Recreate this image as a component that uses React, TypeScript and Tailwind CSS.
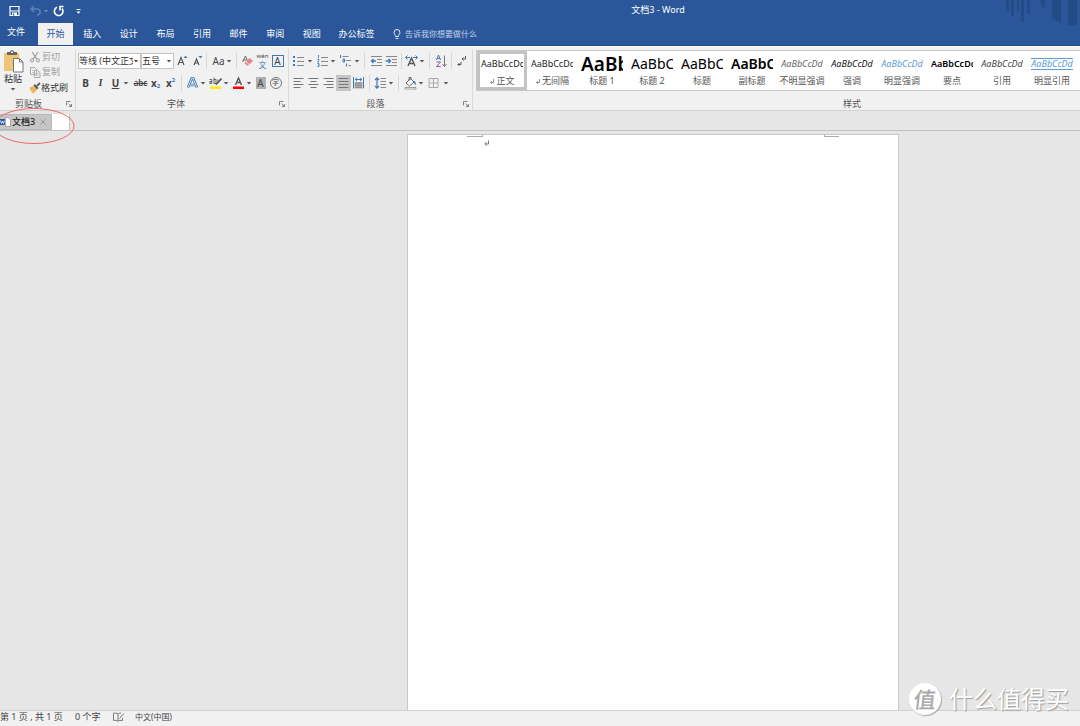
import type { ReactNode } from "react";
import { clsx } from "clsx";

const MENU_TABS = ["插入", "设计", "布局", "引用", "邮件", "审阅", "视图"];

type StyleItem = { label: string; sample: string; sampleClass: string; mark?: boolean; active?: boolean };

const STYLES: StyleItem[] = [
  { label: "正文", sample: "AaBbCcDd", sampleClass: "text-[9px] text-[#222]", mark: true, active: true },
  { label: "无间隔", sample: "AaBbCcDd", sampleClass: "text-[9px] text-[#222]", mark: true },
  { label: "标题 1", sample: "AaBb", sampleClass: "text-[19px] font-semibold text-black" },
  { label: "标题 2", sample: "AaBbC", sampleClass: "text-[14px] text-black" },
  { label: "标题", sample: "AaBbC", sampleClass: "text-[14px] text-black" },
  { label: "副标题", sample: "AaBbC", sampleClass: "text-[14px] font-semibold text-black" },
  { label: "不明显强调", sample: "AaBbCcDd", sampleClass: "text-[9px] italic text-[#666]" },
  { label: "强调", sample: "AaBbCcDd", sampleClass: "text-[9px] italic text-[#111]" },
  { label: "明显强调", sample: "AaBbCcDd", sampleClass: "text-[9px] italic text-[#5b9bd5]" },
  { label: "要点", sample: "AaBbCcDd", sampleClass: "text-[9px] font-semibold text-black" },
  { label: "引用", sample: "AaBbCcDd", sampleClass: "text-[9px] italic text-[#444]" },
  { label: "明显引用", sample: "AaBbCcDd", sampleClass: "border-y border-[#5b9bd5] text-[9px] italic text-[#5b9bd5]" },
  { label: "不明显参考", sample: "AaBbCcDd", sampleClass: "text-[9px] text-[#666]" },
];

function Tool({ label, className, children }: { label: string; className?: string; children: ReactNode }) {
  return (
    <button type="button" aria-label={label} className={clsx("flex h-4 w-[15px] shrink-0 items-center justify-center", className)}>
      {children}
    </button>
  );
}

function Svg({ children, className = "h-4 w-[15px]" }: { children: ReactNode; className?: string }) {
  return (
    <svg viewBox="0 0 15 16" fill="none" className={className} aria-hidden="true">
      {children}
    </svg>
  );
}

function Caret({ className }: { className?: string }) {
  return (
    <svg viewBox="0 0 6 16" className={clsx("h-4 w-1.5 shrink-0", className)} aria-hidden="true">
      <path d="M.8 7h4.400L3 9.500z" fill="#555" />
    </svg>
  );
}

function Sep({ className }: { className?: string }) {
  return <span className={clsx("h-4 w-px shrink-0 bg-[#d8d8d8]", className)} />;
}

function Launcher() {
  return (
    <button type="button" aria-label="更多选项" className="absolute right-0.5 bottom-0.5 size-2">
      <svg viewBox="0 0 8 8" fill="none" stroke="#777" strokeWidth="0.900" aria-hidden="true">
        <path d="M1.500 5.500v-4h4M3.500 3.500l3 3M6.500 4v2.500H4" />
      </svg>
    </button>
  );
}

function Group({ title, className, labelClass, launcher = true, children }: { title: string; className?: string; labelClass?: string; launcher?: boolean; children: ReactNode }) {
  return (
    <section aria-label={title} className={clsx("relative flex flex-col justify-between", className)}>
      {children}
      <h2 className={clsx("h-3 text-center text-[9px] leading-3 text-[#555]", labelClass)}>{title}</h2>
      {launcher ? <Launcher /> : null}
    </section>
  );
}

function Combo({ label, value, className }: { label: string; value: string; className: string }) {
  return (
    <label className={clsx("flex h-4 shrink-0 items-center border border-[#c3c3c3] bg-white", className)}>
      <span className="sr-only">{label}</span>
      <select className="h-full min-w-0 flex-1 appearance-none text-[9px] leading-[14px] whitespace-nowrap text-[#333]">
        <option>{value}</option>
      </select>
      <Caret className="mr-px" />
    </label>
  );
}

function Lines({ d }: { d: string }) {
  return (
    <Svg>
      <path d={d} stroke="#777" />
    </Svg>
  );
}

function TitleBar() {
  return (
    <div className="relative flex h-[23px] items-start overflow-hidden">
      <div className="flex items-center pt-[3px] pl-[7px]">
        <Tool label="保存">
          <Svg>
            <path d="M3 3.500h9v9H3zM3.500 8h8" stroke="#fff" strokeWidth="1.200" />
            <path d="M5 9.500h5v3H5z" fill="#fff" />
            <path d="M6 10.500h1.200v2H6z" fill="#2b579a" />
          </Svg>
        </Tool>
        <Tool label="撤消" className="ml-1.5">
          <Svg>
            <path d="M6 3 3 6l3 3M3.300 6h5.200c2.400 0 3.600 1.300 3.600 3s-1.200 3-3 3" stroke="#5b80b8" strokeWidth="1.500" />
          </Svg>
        </Tool>
        <svg viewBox="0 0 6 16" className="h-4 w-1.5" aria-hidden="true">
          <path d="M1 7h4L3 9.200z" fill="#6f8fc0" />
        </svg>
        <Tool label="重复" className="ml-0.5">
          <Svg>
            <path d="M6 4.300A4.300 4.300 0 1 0 11 5.500M9 7.500V3.500M8.300 3.500H12.500" stroke="#fff" strokeWidth="1.600" />
          </Svg>
        </Tool>
        <Tool label="自定义快速访问工具栏" className="ml-[5px]">
          <Svg>
            <path d="M5.500 6.500h4" stroke="#fff" />
            <path d="M5.500 8.500h4l-2 2.200z" fill="#fff" />
          </Svg>
        </Tool>
      </div>
      <h1 className="flex-1 pt-1 pr-[10px] text-center text-[9px] leading-3 text-white">
        <span className="ml-[160px]">文档3 - Word</span>
      </h1>
    </div>
  );
}

function RibbonTabs() {
  return (
    <nav className="flex h-[22px] items-stretch text-[9px] text-white">
      <button type="button" className="mr-1.5 w-8 pb-1">文件</button>
      <button type="button" className="w-[35px] bg-[#f1f1f1] text-[#2b579a]">开始</button>
      <div className="ml-px flex w-[256px]">
        {MENU_TABS.map((tab) => (
          <button key={tab} type="button" className="flex-1">{tab}</button>
        ))}
      </div>
      <button type="button" className="w-[53px]">办公标签</button>
      <label className="ml-2 flex items-center">
        <svg viewBox="0 0 12 12" className="size-3" fill="none" stroke="#e6edf8" aria-hidden="true">
          <path d="M4.600 8.500c0-1.500-1.500-2-1.500-4.100a2.900 2.900 0 0 1 5.800 0c0 2.100-1.500 2.600-1.500 4.100zM4.600 10.500h2.800" />
        </svg>
        <span className="sr-only">操作说明搜索</span>
        <input placeholder="告诉我你想要做什么" className="ml-0.5 h-4 w-28 text-[8px] leading-4 outline-none placeholder:text-[#c5d3e8]" />
      </label>
    </nav>
  );
}

function ClipboardGroup() {
  return (
    <Group title="剪贴板" className="w-[75px] shrink-0" labelClass="pr-[18px]">
      <div className="flex text-[9px] leading-3 text-[#333]">
        <button type="button" className="flex w-[26px] flex-col items-center">
          <svg viewBox="0 0 22 24" className="h-6 w-[22px]" aria-hidden="true">
            <path d="M2 4h15v18H2z" fill="#eec578" />
            <path d="M5 6V3h3c0-2.500 4-2.500 4 0h3v3z" fill="#666" />
            <path d="M9 2.500h2v1.500H9z" fill="#f1f1f1" />
            <path d="M11.500 9.500h6l3.500 3.500v10h-9.500z" fill="#fff" stroke="#777" />
            <path d="M17.500 9.500V13H21" fill="none" stroke="#777" />
          </svg>
          <span>粘贴</span>
          <Caret className="-mt-1" />
        </button>
        <div className="ml-[3px] flex flex-col">
          <button type="button" className="flex h-[15px] items-center gap-px text-[#a0a0a0]">
            <svg viewBox="0 0 12 12" className="size-3" fill="none" stroke="#999" aria-hidden="true">
              <path d="M3 1l4.800 7M9 1 4.200 8" strokeWidth="1.200" />
              <circle cx="3" cy="9.300" r="1.600" />
              <circle cx="9" cy="9.300" r="1.600" />
            </svg>
            剪切
          </button>
          <button type="button" className="flex h-4 items-center gap-px text-[#a0a0a0]">
            <svg viewBox="0 0 12 12" className="size-3" fill="#f1f1f1" stroke="#aaa" aria-hidden="true">
              <path d="M1.500 1.500h4l2 2v5h-6zM5.500 4.500h3l2.500 2v5H5.500z" />
              <path d="M3 4.500h2M3 6.500h2M7 7.500h2.500M7 9.500h2.500" strokeWidth="0.700" />
            </svg>
            复制
          </button>
          <button type="button" className="flex h-4 items-center">
            <svg viewBox="0 0 12 12" className="size-3" aria-hidden="true">
              <path d="M.5 5.500 4.500 4l3.500 4-3.500 3.500C2.500 10.500 1 8 .5 5.500z" fill="#eeb55a" />
              <path d="M4.500 3.500 6 2l3.500 4L8 7.500z" fill="#555" />
              <path d="M8 3.800 11 1" stroke="#555" strokeWidth="1.800" />
            </svg>
            格式刷
          </button>
        </div>
      </div>
    </Group>
  );
}

function FontGroup() {
  return (
    <Group title="字体" className="w-[213px] shrink-0 border-l border-[#dadada] pl-0.5" labelClass="pr-[14px]">
      <div className="flex flex-col gap-1.5 pt-1 text-[10px] text-[#444]">
        <div className="flex items-center">
          <Combo label="字体" value="等线 (中文正文)" className="w-[63px]" />
          <Combo label="字号" value="五号" className="w-[33px]" />
          <Tool label="增大字号">
            <Svg>
              <path d="M4 12 7 4.500l3 7.500M5 9.500h4" stroke="#555" strokeWidth="1.200" />
              <path d="M9.500 5h4l-2-2.200z" fill="#3f78b5" />
            </Svg>
          </Tool>
          <Tool label="减小字号">
            <Svg>
              <path d="M5 12 7.500 6l2.500 6M6 10h3" stroke="#555" strokeWidth="1.200" />
              <path d="M9.500 3h4l-2 2.200z" fill="#3f78b5" />
            </Svg>
          </Tool>
          <Sep className="mr-1 ml-0.5" />
          <Tool label="更改大小写">Aa</Tool>
          <Caret className="mr-1" />
          <Sep className="mr-[3px]" />
          <Tool label="清除所有格式">
            <Svg>
              <path d="M2.500 9 5.500 3l2 5M3.500 7h3" stroke="#666" />
              <path d="m4.500 10 5-5 3.500 3-5.500 5z" fill="#e8828c" />
              <path d="m6 8.500 3.500 3.300" stroke="#fff" strokeWidth="0.700" />
            </Svg>
          </Tool>
          <Tool label="拼音指南" className="flex-col">
            <span className="text-[6px] leading-[7px]">wén</span>
            <span className="text-[8px] leading-[9px] text-[#3f78b5]">文</span>
          </Tool>
          <Tool label="字符边框">
            <span className="size-3 border border-[#3f78b5] text-center leading-[10px]">A</span>
          </Tool>
        </div>
        <div className="flex items-center">
          <Tool label="加粗"><b>B</b></Tool>
          <Tool label="倾斜"><i className="font-serif font-bold">I</i></Tool>
          <Tool label="下划线"><b className="underline">U</b></Tool>
          <Caret />
          <Tool label="删除线" className="ml-1"><s className="text-[8px] font-semibold">abc</s></Tool>
          <Tool label="下标">
            <span className="font-bold">x</span>
            <span className="mt-1.5 text-[6px] font-bold text-[#3f78b5]">2</span>
          </Tool>
          <Tool label="上标">
            <span className="font-bold">x</span>
            <span className="mb-1.5 text-[6px] font-bold text-[#3f78b5]">2</span>
          </Tool>
          <Sep className="mr-[3px] ml-[3px]" />
          <Tool label="文本效果">
            <Svg>
              <path d="m3 12.500 3.700-9h1.600l3.700 9M5 10h5" stroke="#3f78b5" strokeWidth="2.600" />
              <path d="m3 12.500 3.800-9h1.400l3.800 9M5 10h5" stroke="#e8f1fb" strokeWidth="0.900" />
            </Svg>
          </Tool>
          <Caret />
          <Tool label="突出显示颜色" className="ml-0.5">
            <Svg>
              <path d="M2 11.500h11v2.500H2z" fill="#ffed00" />
              <path d="m8 9.500 5.500-6" stroke="#555" strokeWidth="1.800" />
              <path d="M1.500 4.500h2.300v4H1.800v-2h2M6 2.500v6h2v-4H6M9.500 4.500l1 2.500" stroke="#555" strokeWidth="0.900" />
            </Svg>
          </Tool>
          <Caret />
          <Tool label="字体颜色" className="ml-0.5">
            <Svg>
              <path d="m4.500 10 3-7 3 7M5.500 7.500h4" stroke="#555" strokeWidth="1.400" />
              <path d="M2 11.500h11v2.500H2z" fill="#f00" />
            </Svg>
          </Tool>
          <Caret />
          <Tool label="字符底纹" className="ml-px"><span className="h-3 w-2.5 bg-[#b0b0b0] text-center leading-3">A</span></Tool>
          <Tool label="带圈字符"><span className="size-3 rounded-full border border-[#777] text-center text-[7px] leading-[10px]">字</span></Tool>
        </div>
      </div>
    </Group>
  );
}

function ParagraphGroup() {
  return (
    <Group title="段落" className="w-[184px] shrink-0 border-l border-[#dadada] pl-0.5" labelClass="pr-3">
      <div className="flex flex-col gap-1.5 pt-1">
        <div className="flex items-center">
          <Tool label="项目符号">
            <Svg>
              <path d="M2 3h2v2H2zM2 7h2v2H2zM2 11h2v2H2z" fill="#3f78b5" />
              <path d="M6 4.500h7M6 8.500h7M6 12.500h7" stroke="#888" />
            </Svg>
          </Tool>
          <Caret className="ml-px" />
          <Tool label="编号" className="ml-0.5">
            <Svg>
              <path d="M3.500 2v3M2.500 6.500h1.500v1.200l-1.500 1.200H4M2.500 10.500H4v3H2.500M3 12h1" stroke="#3f78b5" strokeWidth="0.900" />
              <path d="M6 4.500h7M6 8.500h7M6 12.500h7" stroke="#888" />
            </Svg>
          </Tool>
          <Caret />
          <Tool label="多级列表" className="ml-0.5">
            <Svg>
              <path d="M2.500 2v3M5 6h1.500v3H5zM8.500 10.500v3" stroke="#3f78b5" />
              <path d="M4.500 3.500h6M8 7.500h5M10.500 12.500H13" stroke="#888" />
            </Svg>
          </Tool>
          <Caret className="ml-px" />
          <Sep className="mx-1" />
          <Tool label="减少缩进量">
            <Svg>
              <path d="M2 3.500h11M8 6.500h5M8 9.500h5M2 12.500h11" stroke="#888" />
              <path d="M7 8H3M4.500 6 2.500 8l2 2" stroke="#3f78b5" strokeWidth="1.400" />
            </Svg>
          </Tool>
          <Tool label="增加缩进量">
            <Svg>
              <path d="M2 3.500h11M8 6.500h5M8 9.500h5M2 12.500h11" stroke="#888" />
              <path d="M1.500 8h4M4.500 6l2 2-2 2" stroke="#3f78b5" strokeWidth="1.400" />
            </Svg>
          </Tool>
          <Sep className="mx-0.5" />
          <Tool label="中文版式">
            <Svg>
              <path d="M4 13 7.500 5l3.500 8M5 10.500h5" stroke="#555" strokeWidth="1.400" />
              <path d="M1.500 4.500H6M3.500 2.500l-2 2 2 2M13.500 4.500H9M11.500 2.500l2 2-2 2" stroke="#3f78b5" />
            </Svg>
          </Tool>
          <Caret />
          <Sep className="mx-1" />
          <Tool label="排序">
            <Svg>
              <path d="m2.500 7 2-5 2 5M3.200 5.500h2.600" stroke="#3f78b5" />
              <path d="M2.500 9h4l-4 4.500h4" stroke="#9455a8" />
              <path d="M10.500 2.500v11M8.500 11l2 2.500 2-2.500" stroke="#777" />
            </Svg>
          </Tool>
          <Sep className="mx-0.5" />
          <Tool label="显示编辑标记">
            <Svg>
              <path d="M11.500 3v3H8M9.500 4.500 8 6l1.500 1.500M7 9v2.500H4M5.500 10 4 11.500 5.500 13" stroke="#555" />
            </Svg>
          </Tool>
        </div>
        <div className="flex items-center">
          <Tool label="左对齐"><Lines d="M2.500 3.500h10M2.500 6.500h7M2.500 9.500h10M2.500 12.500h7" /></Tool>
          <Tool label="居中"><Lines d="M2.500 3.500h10M4.500 6.500h6M2.500 9.500h10M4.500 12.500h6" /></Tool>
          <Tool label="右对齐"><Lines d="M2.500 3.500h10M5.500 6.500h7M2.500 9.500h10M5.500 12.500h7" /></Tool>
          <Tool label="两端对齐" className="bg-[#c5c5c5]"><Lines d="M2.500 3.500h10M2.500 6.500h10M2.500 9.500h10M2.500 12.500h10" /></Tool>
          <Tool label="分散对齐">
            <Svg>
              <path d="M3.500 7h8v6.500h-8z" fill="#aaa" />
              <path d="M2.500 2v11.500M12.500 2v11.500M4 4.500h7M6 2.800 4.200 4.500 6 6.200M9 2.800l1.800 1.700L9 6.200" stroke="#3f78b5" />
              <path d="M4 8.500h7M4 10.500h7M4 12.500h7" stroke="#888" strokeWidth="0.700" />
            </Svg>
          </Tool>
          <Sep className="mx-[3px]" />
          <Tool label="行和段落间距">
            <Svg>
              <path d="M4 3v10M2 5l2-2.200L6 5M2 11l2 2.200L6 11" stroke="#3f78b5" strokeWidth="1.200" />
              <path d="M7.500 3.500H13M7.500 6.500H13M7.500 9.500H13M7.500 12.500H13" stroke="#888" />
            </Svg>
          </Tool>
          <Caret />
          <Sep className="mx-1" />
          <Tool label="底纹">
            <Svg>
              <path d="m3 8 4.500-4.500L11 7l-4.500 4z" fill="#fff" stroke="#666" />
              <path d="M6 6V2.500h2V5" stroke="#666" />
              <path d="M11 5.500c2 1.500 2 3 1.500 5-.5-1-1-2-2-3z" fill="#3f78b5" />
              <path d="M2 12.500h11v1.500H2z" fill="#fff" stroke="#888" strokeWidth="0.800" />
            </Svg>
          </Tool>
          <Caret />
          <Tool label="边框" className="ml-0.5"><Svg><path d="M3 3.500h9v9H3zM7.500 3.500v9M3 8h9" stroke="#aaa" /></Svg></Tool>
          <Caret className="ml-0.5" />
        </div>
      </div>
    </Group>
  );
}

function StylesGroup() {
  return (
    <Group title="样式" className="min-w-0 flex-1 border-l border-[#dadada] pl-[3px]" labelClass="pl-[148px]" launcher={false}>
      <div className="mt-px flex h-[41px] overflow-hidden border border-r-0 border-[#c8c8c8] bg-white">
        {STYLES.map((item) => (
          <button
            key={item.label}
            type="button"
            className={clsx("flex w-[50px] shrink-0 flex-col items-center justify-between", item.active ? "border-[3px] border-[#c3c3c3]" : "p-[3px]")}
          >
            <span className="flex h-5 w-[42px] items-center overflow-hidden">
              <span className={clsx("w-full leading-[10px] whitespace-nowrap", item.sampleClass)}>{item.sample}</span>
            </span>
            <span className="flex h-3 items-center gap-px text-[9px] leading-3 whitespace-nowrap text-[#555]">
              {item.mark ? (
                <svg viewBox="0 0 6 8" className="h-2 w-1.5" fill="none" stroke="#777" strokeWidth="0.800" aria-hidden="true">
                  <path d="M4.500 2v3.500H1.500M3 4 1.500 5.500 3 7" />
                </svg>
              ) : null}
              {item.label}
            </span>
          </button>
        ))}
      </div>
    </Group>
  );
}

function DocumentTabs() {
  return (
    <div className="relative flex h-5 items-end border-t border-[#d2d2d2]">
      <div className="flex h-4 w-[52px] items-center border border-l-0 border-[#b8b8b8] bg-[#c6c6c6]">
        <svg viewBox="0 0 11 12" className="h-3 w-[11px]" aria-hidden="true">
          <path d="M5.500 1.500h3l2 2v7h-5z" fill="#fff" stroke="#999" strokeWidth="0.800" />
          <path d="M0 3h5v6H0z" fill="#2b579a" />
          <path d="m.5 4.500 1 3 1-2.500 1 2.500 1-3" stroke="#fff" strokeWidth="0.800" fill="none" />
        </svg>
        <button type="button" className="ml-px text-[9px] leading-3 font-medium text-[#222]">文档3</button>
        <button type="button" aria-label="关闭" className="ml-1">
          <svg viewBox="0 0 8 8" className="size-2" stroke="#999" aria-hidden="true">
            <path d="m1.500 1.500 5 5M6.500 1.500l-5 5" />
          </svg>
        </button>
      </div>
      <button type="button" aria-label="新建标签" className="h-4 w-[18px] border-r border-[#c6c6c6] bg-white" />
      {/* hand-drawn highlight ring round the tabs */}
      <svg viewBox="0 0 84 38" className="pointer-events-none absolute -top-1 -left-2 z-10 h-[38px] w-[84px]" fill="none" aria-hidden="true">
        <ellipse cx="42" cy="19" rx="40" ry="17.500" stroke="#f0666a" />
      </svg>
    </div>
  );
}

function Watermark() {
  return (
    <div className="pointer-events-none absolute right-[11px] bottom-[11px] flex items-center gap-2 text-white">
      <span className="flex size-8 items-center justify-center rounded-full bg-white text-[22px] leading-8 font-medium text-[#aaa] shadow-[1px_1px_1px_#aaa]">
        <span className="-skew-x-6">值</span>
      </span>
      <span className="text-[24px] leading-8 [text-shadow:1px_1px_1px_#999]">什么值得买</span>
    </div>
  );
}

export default function App() {
  return (
    <div className="relative flex min-h-screen flex-col overflow-hidden bg-[#e6e6e6] font-['Noto_Sans','Noto_Sans_CJK_SC',sans-serif]">
      <header className="relative border-b border-[#1f4e8f] bg-[#2b579a]">
        <svg viewBox="0 0 76 26" className="absolute top-0 right-0 h-[26px] w-[76px]" fill="#234b85" aria-hidden="true">
          <path d="M2 0h3v11H2zM7 0h3v16H7zM13 0h2v11h-2zM17 0h3v22h-3zM23 0h3v14h-3zM36 0h5v9c-3-2-4-5-5-9zM48 0h9v23l-9-5zM64 0h9v25h-9z" />
        </svg>
        <TitleBar />
        <RibbonTabs />
      </header>

      <div className="flex h-16 border-t border-white bg-[#f1f1f1] pt-0.5">
        <ClipboardGroup />
        <FontGroup />
        <ParagraphGroup />
        <StylesGroup />
      </div>

      <DocumentTabs />

      <main className="flex flex-1 border-t border-[#c2c2c2] pt-[3px]">
        <div className="grow-[407]" />
        <article aria-label="文档3" className="flex w-[492px] shrink-0 items-start justify-between border border-b-0 border-[#c8c8c8] bg-white px-[59px]">
          <div className="flex">
            <span className="h-[2px] w-4 border-r border-b border-[#aaa]" />
            <svg viewBox="0 0 8 8" className="mt-1 h-2 w-2" fill="none" stroke="#666" strokeWidth="0.900" aria-hidden="true">
              <path d="M5.500 1.500V5H2M3.500 3.300 1.800 5l1.700 1.700" />
            </svg>
          </div>
          <span className="h-[2px] w-[15px] border-b border-l border-[#aaa]" />
        </article>
        <div className="grow-[181]" />
      </main>

      <footer className="flex h-4 items-start border-t border-[#cfcfcf] bg-[#f1f1f1] text-[9px] leading-3 whitespace-nowrap text-[#444]">
        <span className="w-[75px]">第 1 页 , 共 1 页</span>
        <span className="w-[37px]">0 个字</span>
        <button type="button" aria-label="校对" className="w-[23px]">
          <svg viewBox="0 0 13 12" className="h-3 w-[13px]" fill="none" stroke="#777" aria-hidden="true">
            <path d="M6 3C5 2 3 2 1.500 2.200v7.300C3 9.300 5 9.300 6 10.300c1-1 2.500-1 4.500-.8V7M6 3v7M6 3c1-.8 2-1 3-.9M7.500 7.500 12 2.500" />
          </svg>
        </button>
        <button type="button" className="text-[8px]">中文(中国)</button>
      </footer>

      <Watermark />
    </div>
  );
}
